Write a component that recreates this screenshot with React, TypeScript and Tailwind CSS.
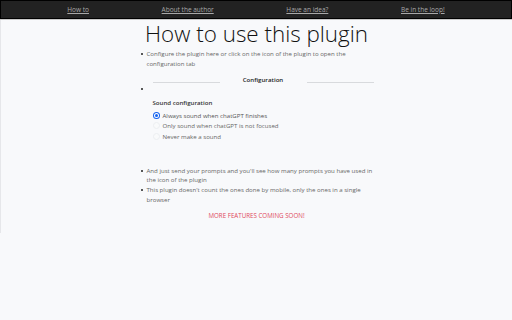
const font = { fontFamily: '"Open Sans", "Noto Sans", sans-serif' };

function Bullet() {
  return <span className="mt-[4px] mr-[4px] h-[2px] w-[2px] shrink-0 rounded-full bg-[#222]" />;
}

function Radio({ checked, label }: { checked?: boolean; label: string }) {
  return (
    <label className="flex h-[10.5px] items-center gap-[3px]">
      {checked ? (
        <span className="flex h-[7px] w-[7px] items-center justify-center rounded-full bg-[#1463f0]">
          <span className="flex h-[5px] w-[5px] items-center justify-center rounded-full bg-white">
            <span className="h-[3px] w-[3px] rounded-full bg-[#1463f0]" />
          </span>
        </span>
      ) : (
        <span className="h-[7px] w-[7px] rounded-full border border-[#eceef1] bg-[#f9fafb]" />
      )}
      <span className={checked ? 'text-[#555]' : 'text-[#666]'}>{label}</span>
    </label>
  );
}

export default function App() {
  const links = ['How to', 'About the author', 'Have an idea?', 'Be in the loop!'];

  return (
    <div className="min-h-[320px] bg-[#f8f9fb]" style={font}>
      <nav className="flex h-[19px] items-center justify-around border border-black bg-[#222] px-[30px]">
        {links.map((l) => (
          <a key={l} className="text-[6.5px] text-[#a8a8a8] underline">
            {l}
          </a>
        ))}
      </nav>
      <div className="h-px bg-[#c9c9c9]" />

      <main className="border-l border-[#e6e7ea] pb-[2px]">
        <h1 className="text-center text-[22.4px] leading-[28px] font-light text-[#111]">How to use this plugin</h1>

        <div className="mx-auto w-[240px] pl-[4px] text-[6.1px] leading-[9.8px] text-[#666]">
          <div className="mt-[1px] flex">
            <Bullet />
            <p>Configure the plugin here or click on the icon of the plugin to open the configuration tab</p>
          </div>

          <div className="mt-[6px] ml-[12px] flex w-[221px] items-center">
            <div className="h-px flex-1 translate-y-[3px] bg-[#d8dadd]" />
            <div className="w-[87px] text-center font-semibold text-[#222]">Configuration</div>
            <div className="h-px flex-1 translate-y-[3px] bg-[#d8dadd]" />
          </div>

          <div className="flex h-[10px]">
            <Bullet />
          </div>

          <div className="mt-[4px] ml-[12px]">
            <div className="mb-[2px] font-semibold text-[#333]">Sound configuration</div>
            <Radio checked label="Always sound when chatGPT finishes" />
            <Radio label="Only sound when chatGPT is not focused" />
            <Radio label="Never make a sound" />
          </div>

          <div className="mt-[24px] flex">
            <Bullet />
            <p>And just send your prompts and you'll see how many prompts you have used in the icon of the plugin</p>
          </div>
          <div className="flex">
            <Bullet />
            <p>This plugin doesn't count the ones done by mobile, only the ones in a single browser</p>
          </div>
        </div>

        <p className="mt-[6px] text-center text-[6.2px] leading-[10px] text-[#e0485c]">MORE FEATURES COMING SOON!</p>
        <div className="h-[10px]" />
      </main>
    </div>
  );
}
